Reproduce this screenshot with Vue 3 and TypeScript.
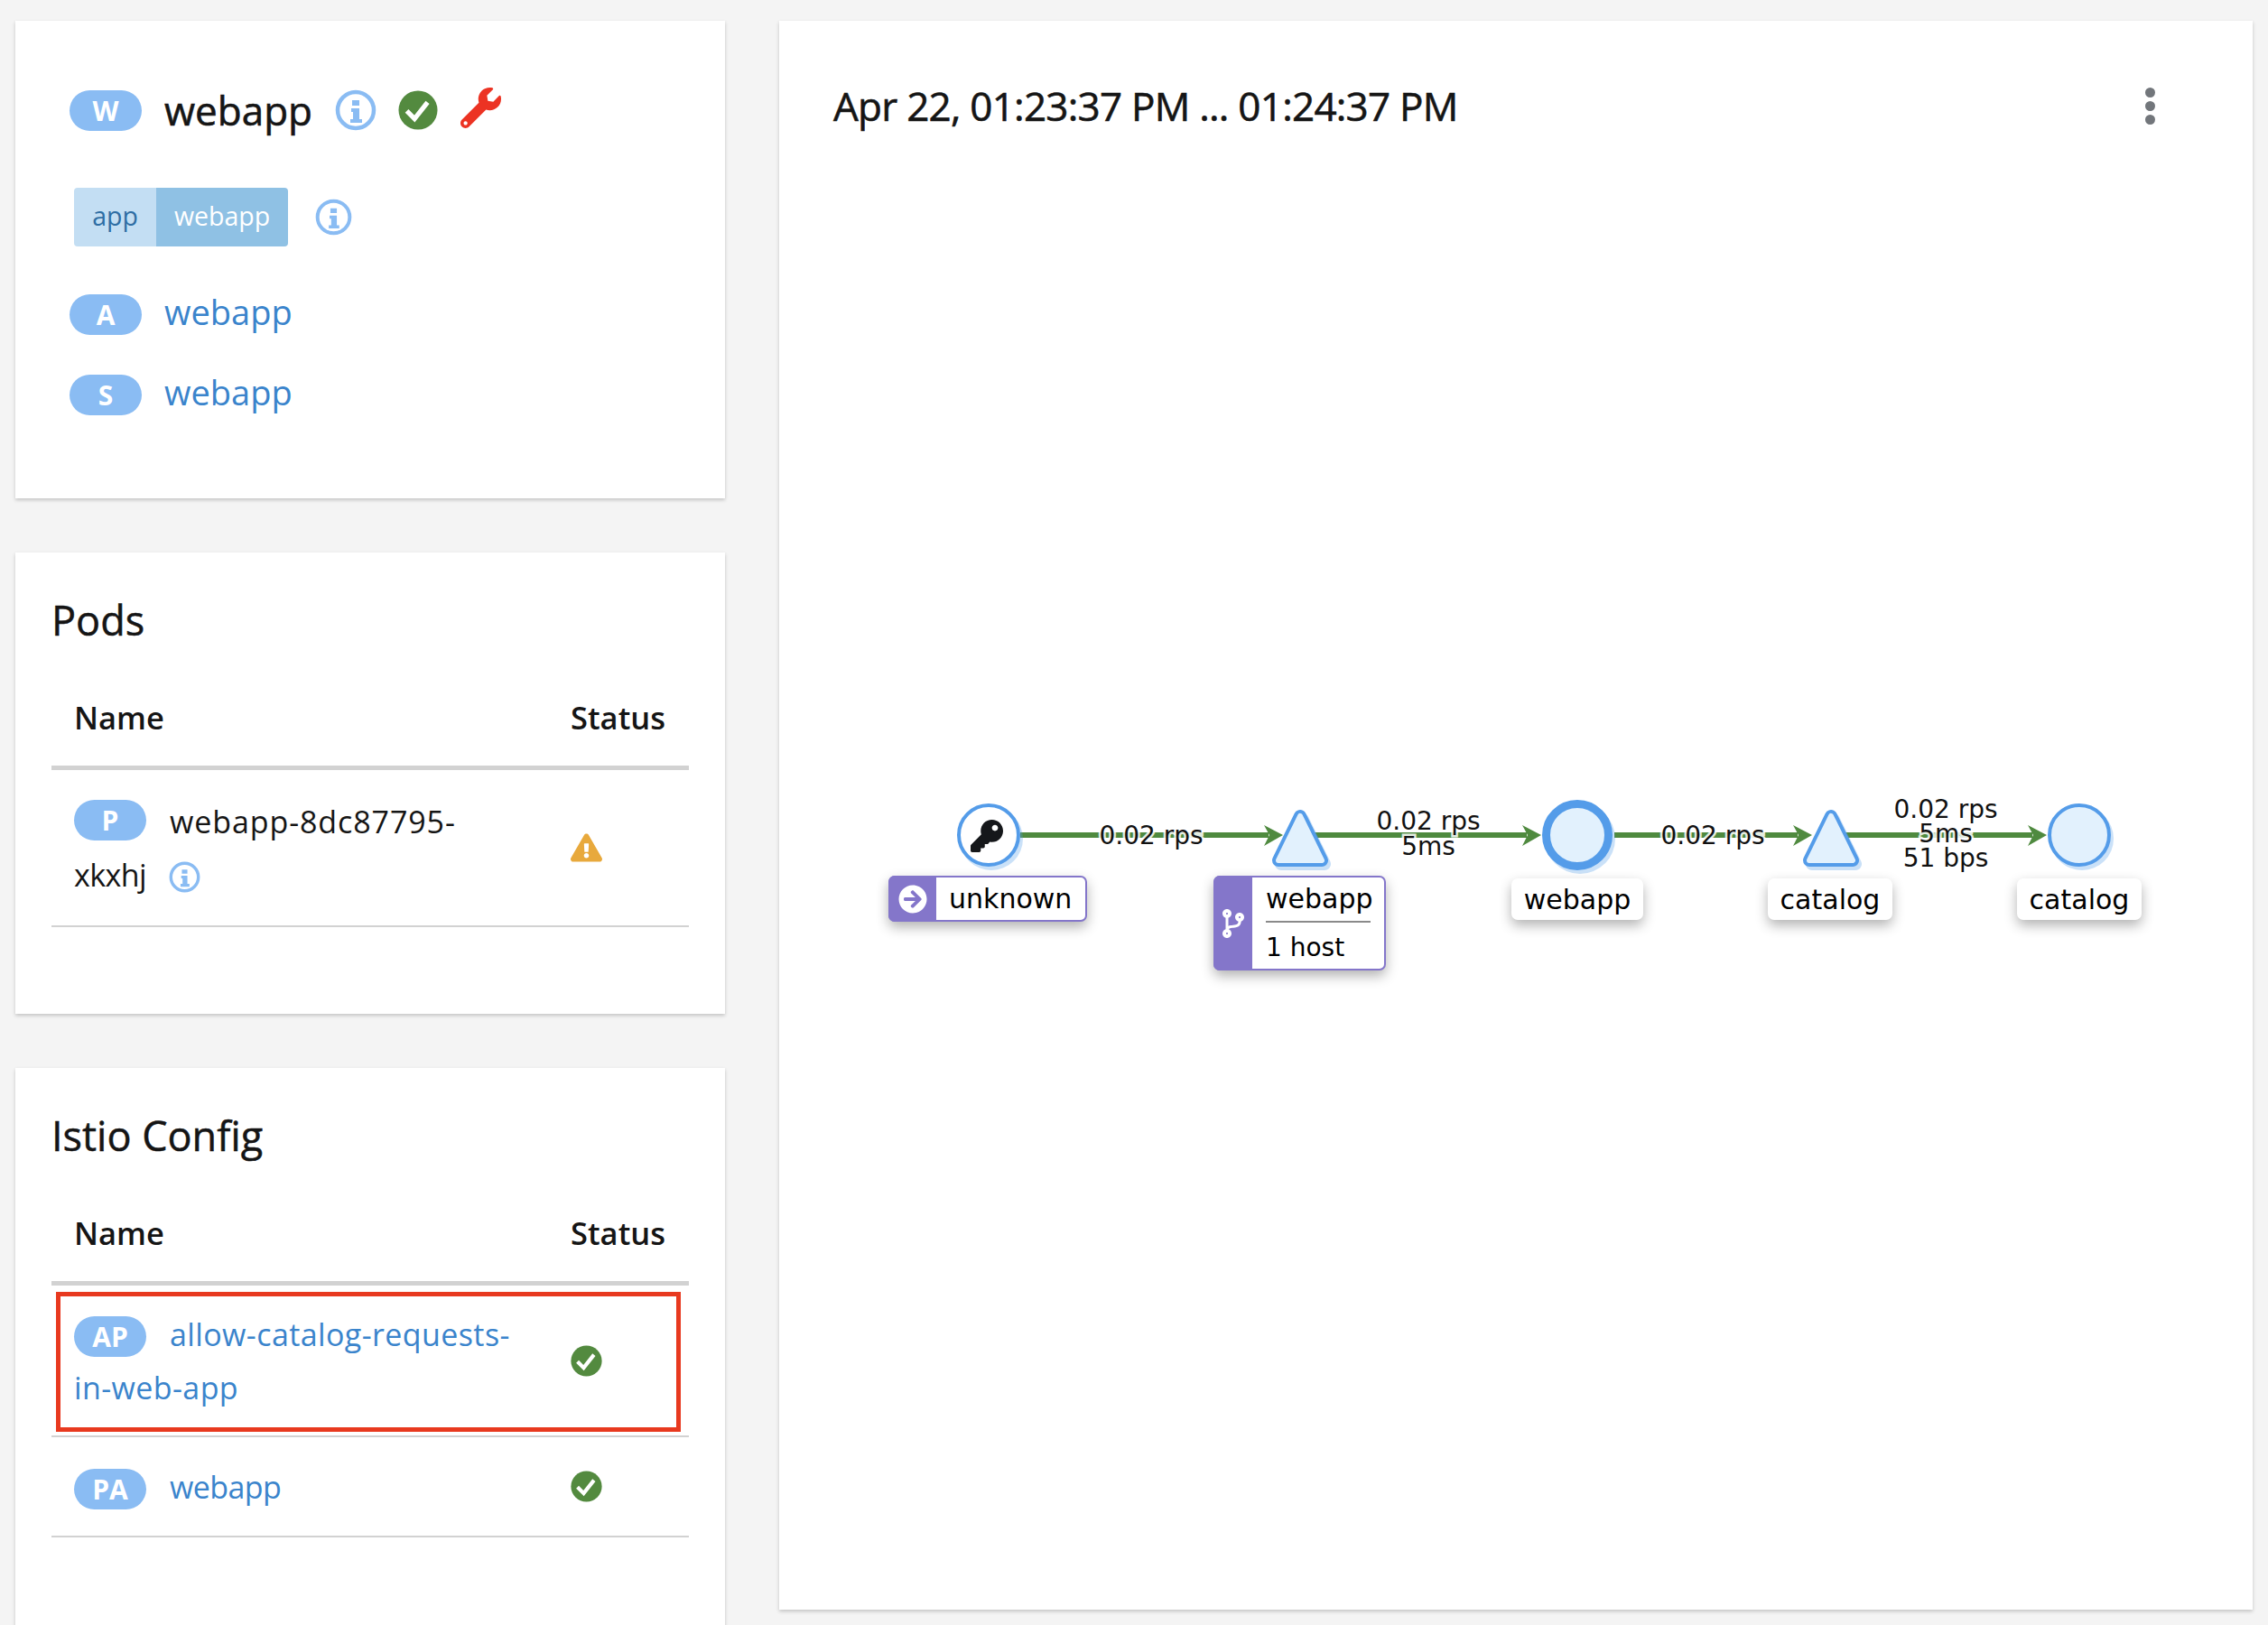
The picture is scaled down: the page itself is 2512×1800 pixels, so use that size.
<template>
  <div class="page">
    <div class="left-col">
      <section class="card summary">
        <div class="head-row">
          <span class="pill">W</span>
          <h2 class="head-name">webapp</h2>
          <svg class="info big" viewBox="0 0 46 46"><circle cx="23" cy="23" r="20" fill="#fff" stroke="#8abcf3" stroke-width="4.5" /><path d="M19 12h8v6h-8zM18 21h9v12h3v4H17v-4h3v-8h-2z" fill="#8abcf3" /></svg>
          <svg class="ok big" viewBox="0 0 46 46"><circle cx="23" cy="23" r="22.5" fill="#538a3f" /><polyline points="10,24 19,33 34,14" fill="none" stroke="#fff" stroke-width="5.5" /></svg>
          <svg class="wrench" viewBox="0 0 512 512"><path :d="wrenchPath" fill="#ec3323" /></svg>
        </div>
        <div class="label-row">
          <div class="tag">
            <span class="tag-key">app</span>
            <span class="tag-val">webapp</span>
          </div>
          <svg class="info mid" viewBox="0 0 46 46"><circle cx="23" cy="23" r="20" fill="#fff" stroke="#8abcf3" stroke-width="4.5" /><path d="M19 12h8v6h-8zM18 21h9v12h3v4H17v-4h3v-8h-2z" fill="#8abcf3" /></svg>
        </div>
        <div class="link-row">
          <span class="pill">A</span>
          <a class="link big-link">webapp</a>
        </div>
        <div class="link-row">
          <span class="pill">S</span>
          <a class="link big-link">webapp</a>
        </div>
      </section>

      <section class="card pods">
        <h3 class="card-title">Pods</h3>
        <div class="table-row table-head">
          <span>Name</span>
          <span>Status</span>
        </div>
        <div class="table-row body-row pod-row">
          <div class="name-cell"><span class="pill small pod-pill">P</span><span class="name-text pod-name">webapp-8dc87795-</span><span class="narrow-text">xkxhj</span><svg class="info small-info" viewBox="0 0 46 46"><circle cx="23" cy="23" r="20" fill="#fff" stroke="#8abcf3" stroke-width="4.5" /><path d="M19 12h8v6h-8zM18 21h9v12h3v4H17v-4h3v-8h-2z" fill="#8abcf3" /></svg></div>
          <svg class="warn" viewBox="0 0 576 512"><path :d="warnPath" fill="#e8a93c" /></svg>
        </div>
      </section>

      <section class="card config">
        <h3 class="card-title">Istio Config</h3>
        <div class="table-row table-head">
          <span>Name</span>
          <span>Status</span>
        </div>
        <div class="table-row body-row ap-row">
          <div class="highlight"></div>
          <div class="name-cell"><span class="pill small">AP</span><a class="link name-text wide-text">allow-catalog-requests-in-web-app</a></div>
          <svg class="ok status-ok" viewBox="0 0 46 46"><circle cx="23" cy="23" r="22.5" fill="#538a3f" /><polyline points="10,24 19,33 34,14" fill="none" stroke="#fff" stroke-width="5.5" /></svg>
        </div>
        <div class="table-row body-row pa-row">
          <div class="name-cell"><span class="pill small">PA</span><a class="link name-text narrow-text">webapp</a></div>
          <svg class="ok status-ok" viewBox="0 0 46 46"><circle cx="23" cy="23" r="22.5" fill="#538a3f" /><polyline points="10,24 19,33 34,14" fill="none" stroke="#fff" stroke-width="5.5" /></svg>
        </div>
      </section>
    </div>

    <section class="card graph-card">
      <header class="graph-head">
        <h2 class="range">Apr 22, 01:23:37 PM ... 01:24:37 PM</h2>
        <div class="kebab"><i></i><i></i><i></i></div>
      </header>
      <div class="graph">
        <!-- viewBox is in page coordinates, easier to measure against the screenshot -->
        <svg class="graph-svg" :viewBox="`${ox} ${oy} 1632 1600`">
          <g v-for="e in edges" :key="e.from">
            <line :x1="e.from" y1="925" :x2="e.to - 16" y2="925" stroke="#4f8a3f" stroke-width="6" />
            <path :d="`M${e.to} 925 L${e.to - 21} 914 L${e.to - 15} 925 L${e.to - 21} 937 Z`" fill="#4f8a3f" />
          </g>

          <g v-for="n in circles" :key="n.x">
            <circle :cx="n.x + 3" cy="929" :r="n.r" fill="#4f9be8" opacity="0.3" />
            <circle :cx="n.x" cy="925" :r="n.r - n.w / 2" :fill="n.fill" stroke="#549ce9" :stroke-width="n.w" />
          </g>
          <g v-for="x in triangles" :key="x">
            <path :d="trianglePath(x + 3, 4)" fill="#4f9be8" opacity="0.3" stroke="#4f9be8" stroke-width="14" stroke-linejoin="round" />
            <path :d="trianglePath(x, 0)" fill="#549ce9" stroke="#549ce9" stroke-width="14" stroke-linejoin="round" />
            <path :d="trianglePath(x, 0)" fill="#e2f1fd" stroke="#e2f1fd" stroke-width="6" stroke-linejoin="round" />
          </g>

          <svg x="1075" y="908" width="36" height="36" viewBox="0 0 512 512"><path :d="keyPath" fill="#15171a" /></svg>

          <text v-for="t in edgeTexts" :key="t.text + t.x" class="edge-text" :x="t.x" :y="t.y" text-anchor="middle">{{ t.text }}</text>
        </svg>

        <div v-for="l in plainLabels" :key="l.x" class="node-label plain" :style="{ left: l.x - ox + 'px', width: l.w + 'px' }">{{ l.text }}</div>

        <div class="node-label boxed" :style="{ left: 984 - ox + 'px' }">
          <span class="box-icon wide"><svg viewBox="0 0 512 512"><path :d="arrowPath" fill="#fff" /></svg></span>
          <span class="box-text">unknown</span>
        </div>
        <div class="node-label boxed tall" :style="{ left: 1344 - ox + 'px' }">
          <span class="box-icon"><svg viewBox="0 0 384 512"><path :d="branchPath" fill="#fff" /></svg></span>
          <span class="box-text stacked">
            <span class="stack-top">webapp</span>
            <span class="stack-bottom">1 host</span>
          </span>
        </div>
      </div>
    </section>
  </div>
</template>

<script setup lang="ts">
const ox = 863
const oy = 183

const wrenchPath = 'M507.73 109.1c-2.24-9.03-13.54-12.09-20.12-5.51l-74.36 74.36-67.88-11.31-11.31-67.88 74.36-74.36c6.62-6.62 3.43-17.9-5.66-20.16-47.38-11.74-99.55.91-136.58 37.93-39.64 39.64-50.55 97.1-34.05 147.2L18.74 402.76c-24.99 24.99-24.99 65.51 0 90.5 24.99 24.99 65.51 24.99 90.5 0l213.21-213.21c50.12 16.71 107.47 5.68 147.37-34.22 37.07-37.07 49.7-89.32 37.91-136.73zM64 472c-13.25 0-24-10.75-24-24 0-13.26 10.75-24 24-24s24 10.74 24 24c0 13.25-10.75 24-24 24z'
const warnPath = 'M569.517 440.013C587.975 472.007 564.806 512 527.94 512H48.054c-36.937 0-59.999-40.055-41.577-71.987L246.423 23.985c18.467-32.009 64.72-31.951 83.154 0l239.94 416.028zM288 354c-25.405 0-46 20.595-46 46s20.595 46 46 46 46-20.595 46-46-20.595-46-46-46zm-43.673-165.346l7.418 136c.347 6.364 5.609 11.346 11.982 11.346h48.546c6.373 0 11.635-4.982 11.982-11.346l7.418-136c.375-6.874-5.098-12.654-11.982-12.654h-63.383c-6.884 0-12.356 5.78-11.981 12.654z'
const keyPath = 'M512 176.001C512 273.203 433.202 352 336 352c-11.22 0-22.19-1.062-32.827-3.069l-24.012 27.014A23.999 23.999 0 0 1 261.223 384H224v40c0 13.255-10.745 24-24 24h-40v40c0 13.255-10.745 24-24 24H24c-13.255 0-24-10.745-24-24v-78.059c0-6.365 2.529-12.47 7.029-16.971l161.802-161.802C163.108 213.814 160 195.271 160 176 160 78.798 238.797.001 335.999 0 433.488-.001 512 78.511 512 176.001zM336 128c0 26.51 21.49 48 48 48s48-21.49 48-48-21.49-48-48-48-48 21.49-48 48z'
const arrowPath = 'M256 8c137 0 248 111 248 248S393 504 256 504 8 393 8 256 119 8 256 8zm-28.9 143.6l75.5 72.4H120c-13.3 0-24 10.7-24 24v16c0 13.3 10.7 24 24 24h182.6l-75.5 72.4c-9.7 9.3-9.9 24.8-.4 34.3l11 10.9c9.4 9.4 24.6 9.4 33.9 0L404.3 273c9.4-9.4 9.4-24.6 0-33.9L271.6 106.3c-9.4-9.4-24.6-9.4-33.9 0l-11 10.9c-9.5 9.6-9.3 25.1.4 34.4z'
const branchPath = 'M384 144c0-44.2-35.8-80-80-80s-80 35.8-80 80c0 36.4 24.3 67.1 57.5 76.8-.6 16.1-4.2 28.5-11 36.9-15.4 19.2-49.3 22.4-85.2 25.7-28.2 2.6-57.4 5.4-81.3 16.9v-144c32.5-10.2 56-40.5 56-76.3 0-44.2-35.8-80-80-80S0 35.8 0 80c0 35.8 23.5 66.1 56 76.3v199.3C23.5 365.9 0 396.2 0 432c0 44.2 35.8 80 80 80s80-35.8 80-80c0-34-21.2-63.1-51.2-74.6 3.1-5.2 7.8-9.8 14.9-13.4 16.2-8.2 40.4-10.4 66.1-12.8 42.2-3.9 90-8.4 118.2-43.4 14-17.4 21.1-39.8 21.6-67.9 31.6-10.8 54.4-40.7 54.4-75.9zM80 64c8.8 0 16 7.2 16 16s-7.2 16-16 16-16-7.2-16-16 7.2-16 16-16zm0 384c-8.8 0-16-7.2-16-16s7.2-16 16-16 16 7.2 16 16-7.2 16-16 16zm224-320c8.8 0 16 7.2 16 16s-7.2 16-16 16-16-7.2-16-16 7.2-16 16-16z'

const edges = [
  { from: 1130, to: 1421 },
  { from: 1445, to: 1707 },
  { from: 1788, to: 2007 },
  { from: 2030, to: 2267 },
]

const circles = [
  { x: 1095, r: 35, w: 4, fill: '#fff' },
  { x: 1747, r: 39, w: 9, fill: '#e2f1fd' },
  { x: 2303, r: 35, w: 4, fill: '#e2f1fd' },
]
const triangles = [1440, 2028]

const trianglePath = (x: number, dy: number) =>
  `M${x} ${904 + dy} L${x + 24} ${953 + dy} L${x - 24} ${953 + dy} Z`

const edgeTexts = [
  { text: '0.02 rps', x: 1275, y: 935 },
  { text: '0.02 rps', x: 1582, y: 919 },
  { text: '5ms', x: 1582, y: 947 },
  { text: '0.02 rps', x: 1897, y: 935 },
  { text: '0.02 rps', x: 2155, y: 906 },
  { text: '5ms', x: 2155, y: 933 },
  { text: '51 bps', x: 2155, y: 960 },
]

const plainLabels = [
  { text: 'webapp', x: 1674, w: 146 },
  { text: 'catalog', x: 1958, w: 138 },
  { text: 'catalog', x: 2234, w: 138 },
]
</script>

<style>
html,
body {
  margin: 0;
  background: #f4f4f4;
}
</style>

<style scoped>
.page {
  display: flex;
  gap: 60px;
  height: 1800px;
  overflow: hidden;
  padding: 23px 17px 0 17px;
  box-sizing: border-box;
  background: #f4f4f4;
  font-family: "Open Sans", "Liberation Sans", sans-serif;
  color: #151515;
}

.left-col {
  display: flex;
  flex-direction: column;
  gap: 60px;
  width: 786px;
  flex: none;
}

.card {
  background: #fff;
  box-shadow: 0 2px 4px rgba(3, 3, 3, 0.2);
  box-sizing: border-box;
}

.summary {
  height: 529px;
  flex: none;
  padding: 76px 0 0 60px;
}

.pods {
  height: 511px;
  flex: none;
  padding: 0 40px;
}

.config {
  height: 700px;
  flex: none;
  padding: 0 40px;
}

.pill {
  display: inline-flex;
  align-items: center;
  justify-content: center;
  width: 80px;
  height: 45px;
  border-radius: 23px;
  background: #8abcf3;
  color: #fff;
  font-size: 30px;
  font-weight: 700;
  flex: none;
}

.head-row,
.link-row,
.label-row {
  display: flex;
  align-items: center;
}

.head-name {
  margin: 0 0 0 25px;
  font-size: 44px;
  font-weight: 400;
  -webkit-text-stroke: 0.6px #151515;
  line-height: 45px;
}

.info.big {
  width: 46px;
  height: 46px;
  margin-left: 25px;
}

.ok.big {
  width: 44px;
  height: 44px;
  margin-left: 24px;
}

.wrench {
  width: 45px;
  height: 45px;
  margin: -6px 0 0 25px;
}

.label-row {
  margin: 63px 0 0 5px;
}

.tag {
  display: flex;
  height: 65px;
  border-radius: 4px;
  overflow: hidden;
  font-size: 28.5px;
  line-height: 63px;
}

.tag-key {
  width: 91px;
  text-align: center;
  background: #c3def3;
  color: #2f6ea4;
}

.tag-val {
  width: 146px;
  text-align: center;
  background: #8fc1e4;
  color: #fff;
}

.info.mid {
  width: 41px;
  height: 41px;
  margin-left: 30px;
}

.link-row {
  margin-top: 53px;
}

.link-row + .link-row {
  margin-top: 44px;
}

.link {
  color: #3a84cc;
}

.big-link {
  margin: -3px 0 3px 25px;
  font-size: 38px;
  line-height: 45px;
}

.card-title {
  margin: 0;
  padding-top: 45px;
  font-size: 45px;
  font-weight: 400;
  -webkit-text-stroke: 0.5px #151515;
  line-height: 60px;
}

.table-row {
  position: relative;
  display: grid;
  grid-template-columns: 575px 1fr;
  align-items: center;
}

.table-head {
  height: 136px;
  padding-top: 23px;
  border-bottom: 5px solid #d2d2d2;
  box-sizing: border-box;
  font-size: 34.5px;
  font-weight: 600;
}

.table-head span:first-child {
  padding-left: 25px;
}

.body-row {
  border-bottom: 2px solid #d2d2d2;
  box-sizing: border-box;
}

.pod-row {
  height: 174px;
}

.ap-row {
  height: 168px;
}

.pa-row {
  height: 111px;
}

.name-cell {
  padding: 2px 65px 0 25px;
  font-size: 34px;
  line-height: 59px;
}

.pill.small {
  vertical-align: -1px;
  line-height: 45px;
  height: 45px;
}

.pill.pod-pill {
  vertical-align: 3px;
}

.name-text {
  margin-left: 26px;
}

.wide-text {
  letter-spacing: 0.4px;
}

.pod-name {
  letter-spacing: 0.9px;
}

.narrow-text {
  letter-spacing: -0.6px;
}

.small-info {
  width: 35px;
  height: 35px;
  margin-left: 25px;
  vertical-align: -7px;
}

.warn {
  width: 35px;
  height: 32px;
}

.status-ok {
  width: 35px;
  height: 35px;
}

.highlight {
  position: absolute;
  left: 5px;
  top: 7px;
  width: 692px;
  height: 155px;
  border: 5px solid #e8391f;
  box-sizing: border-box;
}

.graph-card {
  display: flex;
  flex-direction: column;
  width: 1632px;
  height: 1760px;
  flex: none;
}

.graph-head {
  display: flex;
  align-items: center;
  justify-content: space-between;
  height: 160px;
  box-sizing: border-box;
  padding: 28px 108px 0 60px;
}

.range {
  margin: 0;
  font-size: 44px;
  font-weight: 400;
  -webkit-text-stroke: 0.6px #151515;
  letter-spacing: -0.75px;
}

.kebab {
  display: flex;
  flex-direction: column;
  gap: 4px;
}

.kebab i {
  display: block;
  width: 11px;
  height: 11px;
  border-radius: 50%;
  background: #72767b;
}

.graph {
  position: relative;
  flex: 1;
}

.graph-svg {
  position: absolute;
  inset: 0;
  width: 100%;
  height: 100%;
}

.edge-text {
  font-family: "DejaVu Sans", sans-serif;
  font-size: 28px;
  fill: #111;
  paint-order: stroke;
  stroke: rgba(255, 255, 255, 0.85);
  stroke-width: 5px;
}

.node-label {
  position: absolute;
  top: 790px;
  box-sizing: border-box;
  border-radius: 7px;
  background: #fff;
  font-family: "DejaVu Sans", sans-serif;
  font-size: 30px;
  color: #000;
  box-shadow: 0 6px 14px rgba(0, 0, 0, 0.3);
}

.plain {
  height: 46px;
  line-height: 48px;
  text-align: center;
}

.boxed {
  display: flex;
  top: 787px;
  height: 51px;
  border: 2px solid #8476ca;
  width: 220px;
}

.boxed.tall {
  height: 105px;
  width: 191px;
}

.box-icon {
  display: flex;
  align-items: center;
  justify-content: center;
  width: 43px;
  background: #8476ca;
  margin: -2px 0 -2px -2px;
  border-radius: 7px 0 0 7px;
}

.box-icon.wide {
  width: 53px;
}

.box-icon svg {
  height: 32px;
}

.box-text {
  padding-left: 14px;
  line-height: 47px;
}

.stacked {
  display: flex;
  flex-direction: column;
  padding-left: 15px;
  width: 116px;
  box-sizing: content-box;
}

.stack-top {
  height: 48px;
  line-height: 48px;
  border-bottom: 2px solid #8a8a8a;
}

.stack-bottom {
  font-size: 28px;
  line-height: 56px;
}
</style>
